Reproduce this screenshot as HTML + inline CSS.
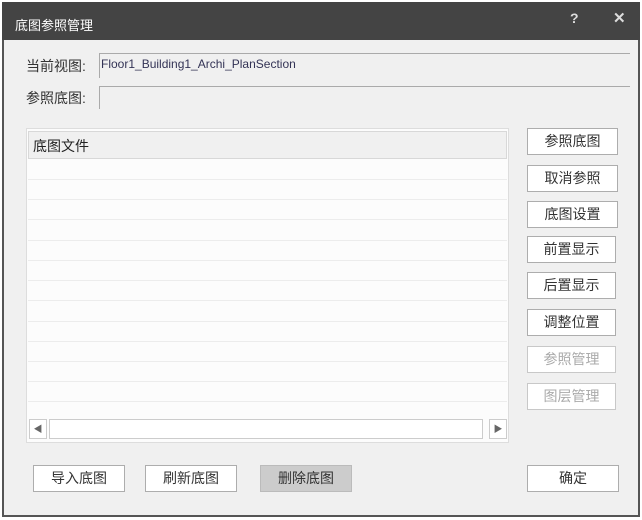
<!DOCTYPE html>
<html><head><meta charset="utf-8"><style>
*{margin:0;padding:0;box-sizing:border-box}
body{width:642px;height:520px;background:#fff;position:relative;overflow:hidden;font-family:"Liberation Sans","Noto Sans CJK SC",sans-serif;font-size:13px;color:#222}
.dlg{position:absolute;left:2px;top:2px;width:638px;height:515px;background:#f0f0f0;border:2px solid #555;border-top:none}
.title{position:absolute;left:2px;top:2px;width:638px;height:38px;background:#444;color:#fff}
.title .t{position:absolute;left:13px;top:13px;font-size:13px}
.title .q{position:absolute;left:568px;top:8px;font-size:14px;font-weight:bold;color:#ddd}
.title .x{position:absolute;left:611px;top:7px;font-size:15px;font-weight:bold;color:#ddd}
.a{position:absolute}
.lbl{font-size:14px;color:#333}
.fld{border-top:1px solid #aaa;border-left:1px solid #aaa;background:#f0f0f0}
.btn{position:absolute;width:91px;height:27px;border:1px solid #adadad;background:#fff;text-align:center;line-height:25px;font-size:14px;color:#333}
.dis{color:#aaa;border-color:#c8c8c8}
.row{position:absolute;left:1px;right:1px;height:1px;background:#ececec}
</style></head><body>
<div class="dlg"></div>
<div class="title"><span class="t">底图参照管理</span><span class="q">?</span><span class="x">✕</span></div>
<div class="a lbl" style="left:26px;top:56px">当前视图:</div>
<div class="a fld" style="left:99px;top:53px;width:531px;height:25px"><span style="position:absolute;left:1px;top:3px;font-size:12px;color:#335">Floor1_Building1_Archi_PlanSection</span></div>
<div class="a lbl" style="left:26px;top:88px">参照底图:</div>
<div class="a fld" style="left:99px;top:86px;width:531px;height:23px"></div>
<div class="a" style="left:26px;top:128px;width:483px;height:315px;border:1px solid #ddd;background:#fcfcfc">
 <div class="a" style="left:1px;top:2px;right:1px;height:28px;background:#f0f0f0;border:1px solid #d8d8d8"><span style="position:absolute;left:4px;top:4px;font-size:14px">底图文件</span></div>
 <div class="row" style="top:50px"></div><div class="row" style="top:70px"></div><div class="row" style="top:90px"></div><div class="row" style="top:111px"></div><div class="row" style="top:131px"></div><div class="row" style="top:151px"></div><div class="row" style="top:171px"></div><div class="row" style="top:192px"></div><div class="row" style="top:212px"></div><div class="row" style="top:232px"></div><div class="row" style="top:252px"></div><div class="row" style="top:272px"></div>
 <div class="a" style="left:2px;top:290px;width:18px;height:20px;border:1px solid #ccc;background:#fff;font-size:9px;color:#666;text-align:center;line-height:18px">◀</div>
 <div class="a" style="left:22px;top:290px;width:434px;height:20px;border:1px solid #ccc;background:#fff"></div>
 <div class="a" style="left:462px;top:290px;width:18px;height:20px;border:1px solid #ccc;background:#fff;font-size:9px;color:#666;text-align:center;line-height:18px">▶</div>
</div>
<div class="btn" style="left:527px;top:128px">参照底图</div>
<div class="btn" style="left:527px;top:165px">取消参照</div>
<div class="btn" style="left:527px;top:201px">底图设置</div>
<div class="btn" style="left:527px;top:236px;width:89px">前置显示</div>
<div class="btn" style="left:527px;top:272px;width:89px">后置显示</div>
<div class="btn" style="left:527px;top:309px;width:89px">调整位置</div>
<div class="btn dis" style="left:527px;top:346px;width:89px">参照管理</div>
<div class="btn dis" style="left:527px;top:383px;width:89px">图层管理</div>
<div class="btn" style="left:33px;top:465px;width:92px">导入底图</div>
<div class="btn" style="left:145px;top:465px;width:92px">刷新底图</div>
<div class="btn" style="left:260px;top:465px;width:92px;background:#ccc;border-color:#bbb">删除底图</div>
<div class="btn" style="left:527px;top:465px;width:92px">确定</div>
</body></html>
